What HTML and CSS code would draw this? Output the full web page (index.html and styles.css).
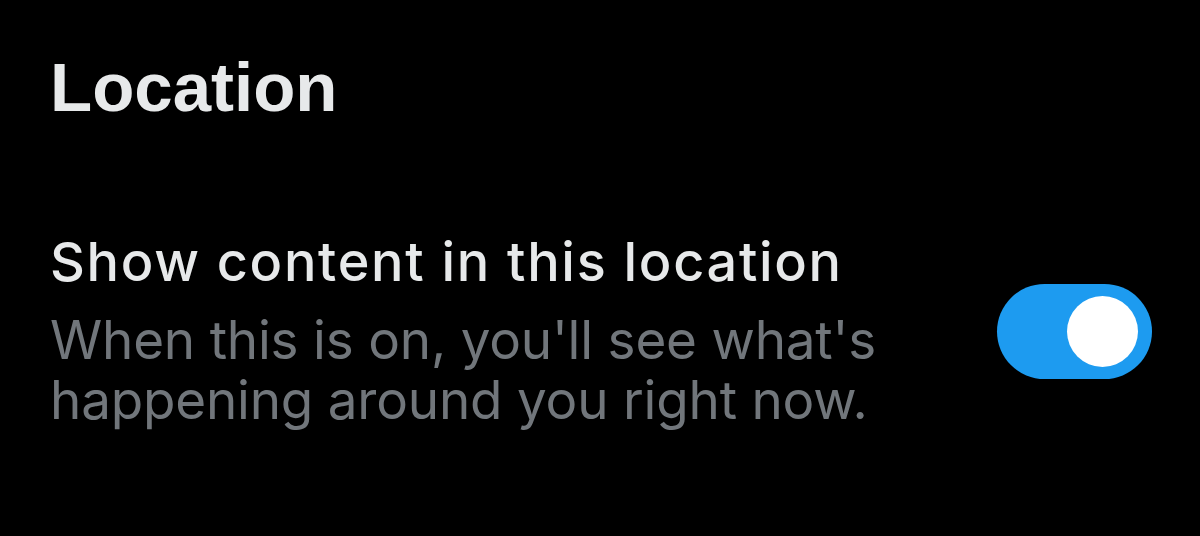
FILE: index.html
```html
<!DOCTYPE html>
<html lang="en">
<head>
    <meta charset="UTF-8">
    <meta name="viewport" content="width=device-width, initial-scale=1.0">
    <title>Location</title>
    <link rel="stylesheet" href="styles.css">
</head>
<body>
    <div class="settings">
        <h1 class="section-title">Location</h1>
        <div class="setting-row">
            <div class="setting-text">
                <div class="setting-label">Show content in this location</div>
                <div class="setting-desc">When this is on, you'll see what's happening around you right now.</div>
            </div>
            <div class="toggle on">
                <div class="toggle-knob"></div>
            </div>
        </div>
    </div>
</body>
</html>
```

FILE: styles.css
```css
body {
    margin: 0;
    padding: 0;
    background: #000;
    font-family: Inter, "Liberation Sans", Arial, sans-serif;
    width: 1200px;
    height: 536px;
    overflow: hidden;
}
.settings {
    padding: 48px 48px 0 50px;
}
.section-title {
    margin: 0;
    font-family: "Liberation Sans", Arial, sans-serif;
    font-size: 69px;
    font-weight: bold;
    line-height: 80px;
    color: #e7e9ea;
}
.setting-row {
    display: flex;
    align-items: center;
    justify-content: space-between;
    margin-top: 104px;
}
.setting-text {
    width: 880px;
}
.setting-label {
    font-size: 54px;
    font-weight: 500;
    letter-spacing: 1.7px;
    line-height: 60px;
    color: #e7e9ea;
    white-space: nowrap;
}
.setting-desc {
    margin-top: 18px;
    font-size: 53px;
    letter-spacing: -0.2px;
    line-height: 60px;
    color: #71767b;
}
.toggle {
    width: 155px;
    height: 95px;
    border-radius: 48px;
    background: #1d9bf0;
    display: flex;
    align-items: center;
    justify-content: flex-end;
    padding: 0 14px;
    box-sizing: border-box;
}
.toggle-knob {
    width: 71px;
    height: 71px;
    border-radius: 50%;
    background: #fff;
}
```
